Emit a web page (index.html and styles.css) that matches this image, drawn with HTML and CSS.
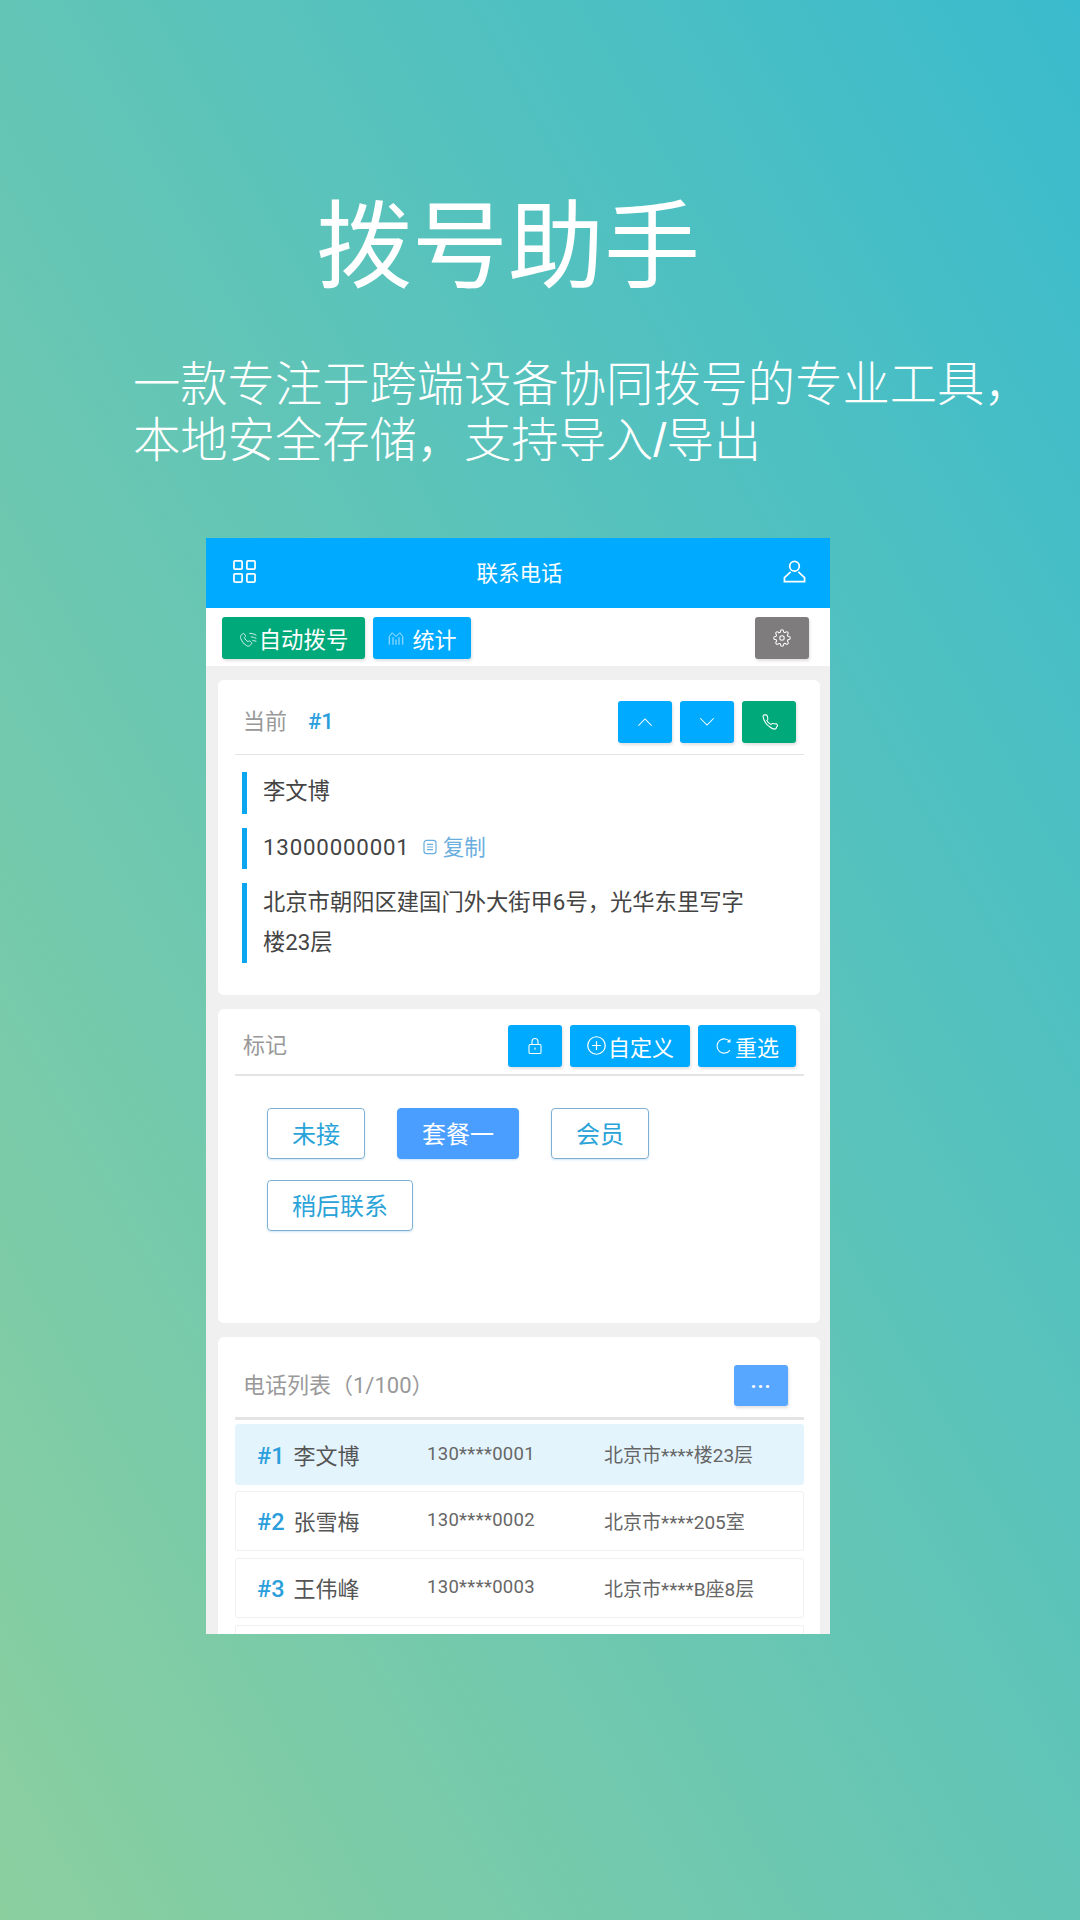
FILE: index.html
```html
<!DOCTYPE html>
<html lang="zh-CN">
<head>
<meta charset="utf-8">
<title>拨号助手</title>
<link rel="stylesheet" href="styles.css">
</head>
<body>
<div class="page">
  <h1 class="hero-title">拨号助手</h1>
  <p class="hero-sub">一款专注于跨端设备协同拨号的专业工具，<br>本地安全存储，支持导入<span class="slash">/</span>导出</p>
  <div class="phone">
    <header class="appbar">
      <svg class="bar-icon" viewBox="0 0 24 24"><rect x="1" y="1" width="8.5" height="8.5" rx="1"/><rect x="14.500" y="1" width="8.5" height="8.5" rx="1"/><rect x="1" y="14.500" width="8.5" height="8.5" rx="1"/><rect x="14.500" y="14.500" width="8.500" height="8.500" rx="1"/></svg>
      <span class="appbar-title">联系电话</span>
      <svg class="bar-icon" viewBox="0 0 24 24"><circle cx="12" cy="6.500" r="5"/><path d="M8 12.500 1.500 18.500V22.500H22.500V18.500L16 12.500"/></svg>
    </header>
    <div class="toolbar">
      <button class="btn green auto">
        <svg class="ic dial" viewBox="0 0 24 24"><path d="M14 20.500c-1 1.200-2.500 1.500-4 .8a17 17 0 0 1-8-9.500C1.500 10 2 8.500 3 7.500l1.500-1.500a1.500 1.500 0 0 1 2.200.2l1.300 2a1.500 1.500 0 0 1-.2 1.800l-1 1a11 11 0 0 0 4.500 5l1.200-.8a1.500 1.500 0 0 1 1.800.2l1.500 1.600a1.500 1.500 0 0 1 0 2z"/><path d="M13 5.500c3 0 6 .5 9 2.500M15 10c2 0 4 .5 7 2M17 14.500l5 1"/></svg>自动拨号
      </button>
      <button class="btn blue stat">
        <svg class="ic" viewBox="0 0 24 24"><path d="M3 21V10l4-5 5 5 5-5 4 5v11M8 21V11M12 21V14M16 21V11"/></svg><span class="stat-label">统计</span>
      </button>
      <button class="btn gray square gear">
        <svg class="ic" viewBox="0 0 24 24"><circle cx="12" cy="12" r="3"/><path d="M19.400 15a1.650 1.650 0 0 0 .33 1.820l.06.06a2 2 0 0 1 0 2.830 2 2 0 0 1-2.830 0l-.06-.06a1.650 1.650 0 0 0-1.820-.33 1.650 1.650 0 0 0-1 1.510V21a2 2 0 0 1-2 2 2 2 0 0 1-2-2v-.09A1.650 1.650 0 0 0 9 19.400a1.650 1.650 0 0 0-1.820.33l-.06.06a2 2 0 0 1-2.830 0 2 2 0 0 1 0-2.830l.06-.06a1.650 1.650 0 0 0 .33-1.820 1.650 1.650 0 0 0-1.510-1H3a2 2 0 0 1-2-2 2 2 0 0 1 2-2h.09A1.650 1.650 0 0 0 4.600 9a1.650 1.650 0 0 0-.33-1.820l-.06-.06a2 2 0 0 1 0-2.830 2 2 0 0 1 2.830 0l.06.06a1.650 1.650 0 0 0 1.820.33H9a1.650 1.650 0 0 0 1-1.510V3a2 2 0 0 1 2-2 2 2 0 0 1 2 2v.09a1.650 1.650 0 0 0 1 1.510 1.650 1.650 0 0 0 1.820-.33l.06-.06a2 2 0 0 1 2.830 0 2 2 0 0 1 0 2.830l-.06.06a1.650 1.650 0 0 0-.33 1.820V9a1.650 1.650 0 0 0 1.510 1H21a2 2 0 0 1 2 2 2 2 0 0 1-2 2h-.09a1.650 1.650 0 0 0-1.510 1z"/></svg>
      </button>
    </div>
    <main class="body">
      <section class="card card-current">
        <div class="card-head">
          <span class="card-title">当前<b class="num cur-num">#1</b></span>
          <div class="actions">
            <button class="btn blue square"><svg class="ic" viewBox="0 0 24 24"><path d="M3 17 12 8l9 9"/></svg></button>
            <button class="btn blue square"><svg class="ic" viewBox="0 0 24 24"><path d="M3 7l9 9 9-9"/></svg></button>
            <button class="btn green square"><svg class="ic" viewBox="0 0 24 24"><path d="M22 18.500c0 1.500-1.200 3-2.800 3a14 14 0 0 1-6-2.800 19 19 0 0 1-6-6A19.800 19.800 0 0 1 4 4.500 2 2 0 0 1 6 2.500h1.800a2 2 0 0 1 2 1.700c.1.900.3 1.800.6 2.700a2 2 0 0 1-.4 2.100l-1 1a16 16 0 0 0 5.500 5.500l1-1a2 2 0 0 1 2.100-.4c.9.300 1.800.5 2.700.6A2 2 0 0 1 22 18.500z"/></svg></button>
          </div>
        </div>
        <div class="info-list">
          <div class="info">李文博</div>
          <div class="info"><span class="phone-no">13000000001</span><span class="copy"><svg class="copy-ic" viewBox="0 0 24 24"><rect x="3" y="2" width="18" height="20" rx="4"/><path d="M7.500 8h9M7.500 12h9M7.500 16h9"/></svg>复制</span></div>
          <div class="info addr">北京市朝阳区建国门外大街甲6号，光华东里写字楼23层</div>
        </div>
      </section>

      <section class="card card-tags">
        <div class="card-head tag-head">
          <span class="card-title">标记</span>
          <div class="actions">
            <button class="btn blue square"><svg class="ic small" viewBox="0 0 24 24"><rect x="4" y="10" width="16" height="12" rx="1.500"/><path d="M8 10V6a4 4 0 0 1 8 0v4M12 14v3"/></svg></button>
            <button class="btn blue custom"><svg class="ic" viewBox="0 0 24 24"><circle cx="12" cy="12" r="10"/><path d="M12 7v10M7 12h10"/></svg>自定义</button>
            <button class="btn blue reset"><svg class="ic" viewBox="0 0 24 24"><path d="M20 6.500A9.500 9.500 0 1 0 20 17.500M20 3v3.500h-3.500"/></svg>重选</button>
          </div>
        </div>
        <div class="tags">
          <span class="tag">未接</span>
          <span class="tag active">套餐一</span>
          <span class="tag">会员</span>
          <span class="tag">稍后联系</span>
        </div>
      </section>

      <section class="card card-list">
        <div class="card-head list-head">
          <span class="card-title">电话列表（1/100）</span>
          <button class="btn more square">···</button>
        </div>
        <div class="rows">
          <div class="row current"><span class="who"><b class="num">#1</b>李文博</span><span class="tel">130****0001</span><span class="place">北京市****楼23层</span></div>
          <div class="row"><span class="who"><b class="num">#2</b>张雪梅</span><span class="tel">130****0002</span><span class="place">北京市****205室</span></div>
          <div class="row"><span class="who"><b class="num">#3</b>王伟峰</span><span class="tel">130****0003</span><span class="place">北京市****B座8层</span></div>
          <div class="row"></div>
        </div>
      </section>
    </main>
  </div>
</div>
</body>
</html>
```
FILE: styles.css
```css
* { box-sizing: border-box; }
html, body { margin: 0; padding: 0; }
body { font-family: Roboto, "Noto Sans CJK SC", sans-serif; }
.page {
  width: 1080px; height: 1920px; overflow: hidden;
  background: linear-gradient(to top right, #8bcf9f, #3abbcd);
  padding-top: 184px;
}
.hero-title {
  margin: 0 0 0 316px; font-size: 96px; line-height: 110px; font-weight: 400; color: #fff;
  font-family: "Noto Sans CJK SC", sans-serif;
}
.hero-sub {
  margin: 59px 0 0 133px; font-size: 47.300px; line-height: 56px; font-weight: 300; color: #fff;
  font-family: "Noto Sans CJK SC", sans-serif;
}
.slash { font-family: "Liberation Sans", sans-serif; }
.phone {
  margin: 69px 0 0 206px; width: 624px; height: 1096px; overflow: hidden;
  background: #f0f0f0; display: flex; flex-direction: column;
}
.appbar {
  height: 70px; background: #00aaff; color: #fff; flex: none;
  display: flex; align-items: center; justify-content: space-between; padding: 0 24px 0 27px;
}
.appbar-title { font-size: 21.500px; margin-top: -3px; }
.bar-icon { width: 23px; height: 23px; fill: none; stroke: #fff; stroke-width: 1.800; margin-top: -3px; }
.toolbar {
  height: 58px; background: #fff; flex: none; display: flex; align-items: flex-start; gap: 8px;
  padding: 9px 21px 0 16px;
}
.btn {
  height: 42px; border: 0; border-radius: 3px; color: #fff; padding: 0; margin: 0;
  display: inline-flex; align-items: center; justify-content: center;
  font: inherit; font-size: 22px; box-shadow: 1px 2px 3px rgba(0, 0, 0, 0.12);
}
.green { background: #00a97a; }
.blue { background: #00aaff; }
.gray { background: #7e7c7d; }
.more { background: #57a6ff; font-size: 20px; letter-spacing: 1px; font-weight: 700; height: 41px; margin-top: 5px; }
.square { width: 54px; }
.auto { width: 143px; font-size: 22.400px; }
.stat { width: 98px; }
.stat-label { margin-left: 7px; }
.gear { margin-left: auto; }
.ic { width: 18px; height: 18px; fill: none; stroke: #fff; stroke-width: 1.400; flex: none; }
.ic.dial { width: 19px; height: 19px; stroke-width: 1.200; opacity: .85; margin-right: 1px; }
.stat .ic { stroke-width: 1.100; opacity: .85; }
.body { padding: 14px 10px 0 12px; display: flex; flex-direction: column; gap: 14px; }
.card { background: #fff; border-radius: 6px; padding: 0 16px 0 17px; flex: none; }
.card-current { height: 315px; }
.card-tags { height: 314px; }
.card-list { height: 400px; }
.card-head {
  height: 75px; display: flex; align-items: center; justify-content: space-between;
  border-bottom: 1px solid #e4e4e4; padding: 4px 8px 0 8px;
}
.tag-head { height: 67px; padding-top: 3px; border-bottom-width: 2px; }
.list-head { height: 83px; padding: 12px 16px 0 8px; border-bottom-width: 3px; }
.card-title { font-size: 22px; color: #999; }
.num { font-weight: 500; color: #2b9fdc; }
.cur-num { margin-left: 21px; }
.actions { display: flex; gap: 8px; margin-top: 5px; }
.info-list { display: flex; flex-direction: column; gap: 14px; padding: 17px 50px 0 7px; }
.info {
  min-height: 41px; border-left: 5px solid #0aa7f0; padding: 0 0 2px 16px; font-size: 22.300px;
  color: #444; line-height: 39.500px; display: flex; align-items: center;
}
.addr { display: block; padding-bottom: 1px; }
.phone-no { letter-spacing: .8px; }
.copy { color: #6aaee0; display: inline-flex; align-items: center; margin-left: 12px; font-size: 21.500px; }
.copy-ic { width: 16px; height: 16px; fill: none; stroke: #6aaee0; stroke-width: 1.800; margin-right: 5px; }
.custom { width: 120px; }
.custom .ic { margin-right: 1px; width: 21px; height: 21px; }
.reset { width: 98px; }
.reset .ic { margin-right: 2px; }
.tags { display: flex; flex-wrap: wrap; gap: 21px 32px; padding: 32px 0 0 32px; }
.tag {
  height: 51px; padding: 0 24px 2px; border: 1px solid #7fb0d2; border-radius: 4px; font-size: 24px;
  color: #29a3d8; display: flex; align-items: center; box-shadow: 0 1px 2px rgba(90, 170, 220, .3);
}
.tag.active { background: #4a9eff; color: #fff; border-color: #4a9eff; }
.rows { display: flex; flex-direction: column; gap: 7px; padding-top: 4px; }
.row {
  height: 60px; flex: none; border: 1px solid #f0f0f0; border-radius: 3px; display: flex; align-items: center;
  padding: 0 0 2px 21px; color: #666; font-size: 19px;
}
.row.current { background: #e4f4fd; border-color: #e4f4fd; height: 61px; margin-bottom: -1px; }
.who { width: 170px; font-size: 22px; color: #555; flex: none; }
.who .num { margin-right: 9px; font-size: 23.500px; }
.tel { width: 177px; flex: none; font-size: 18.500px; letter-spacing: .3px; }
```
